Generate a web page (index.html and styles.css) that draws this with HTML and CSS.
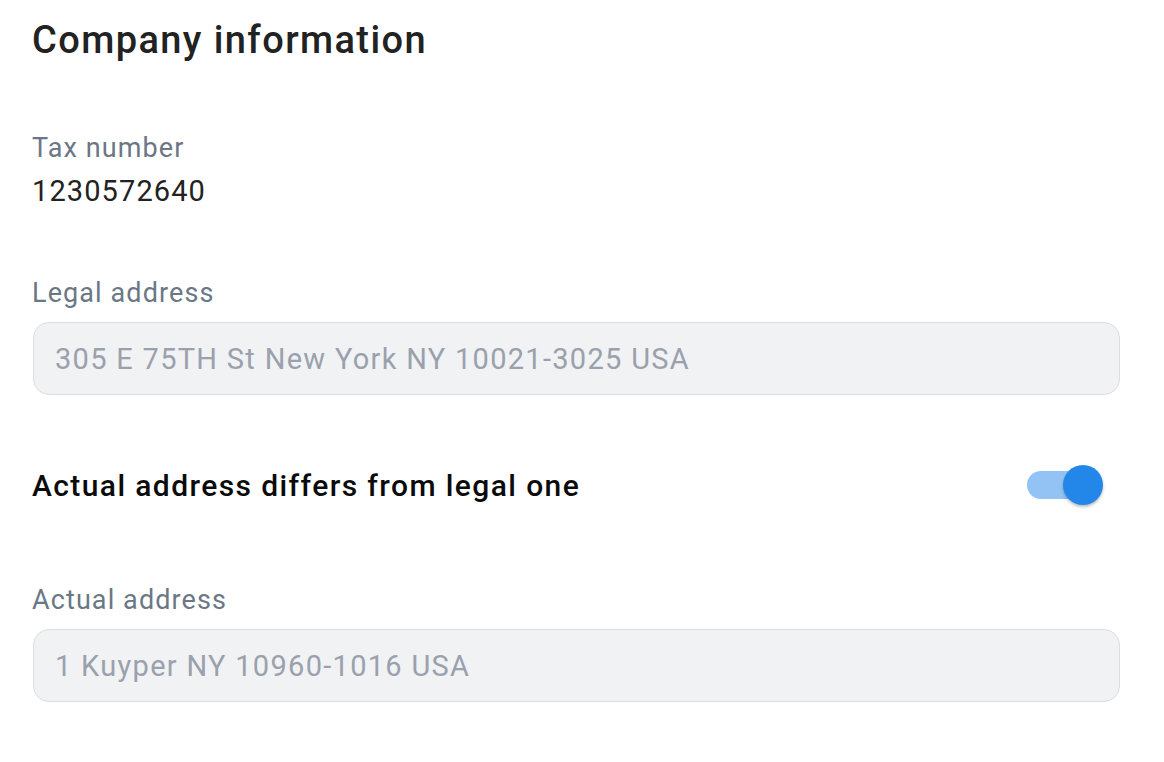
FILE: index.html
```html
<!DOCTYPE html>
<html lang="en">
<head>
<meta charset="utf-8">
<title>Company information</title>
<link rel="stylesheet" href="styles.css">
</head>
<body>
<main class="page">
  <h1 class="title">Company information</h1>

  <section class="field field-static">
    <div class="label">Tax number</div>
    <div class="value">1230572640</div>
  </section>

  <section class="field">
    <div class="label">Legal address</div>
    <div class="input">305 E 75TH St New York NY 10021-3025 USA</div>
  </section>

  <div class="switch-row">
    <span class="switch-text">Actual address differs from legal one</span>
    <span class="switch is-on" role="switch" aria-checked="true">
      <span class="switch-track"></span>
      <span class="switch-thumb"></span>
    </span>
  </div>

  <section class="field">
    <div class="label">Actual address</div>
    <div class="input">1 Kuyper NY 10960-1016 USA</div>
  </section>
</main>
</body>
</html>
```

FILE: styles.css
```css
html, body {
  margin: 0;
  padding: 0;
  background: #ffffff;
}

body {
  font-family: Roboto, "Noto Sans", "Liberation Sans", sans-serif;
  color: #222222;
}

.page {
  padding: 18px 44px 0 32px;
  display: flex;
  flex-direction: column;
}

.title {
  margin: 0;
  font-size: 38px;
  line-height: 44px;
  font-weight: 500;
  letter-spacing: 1.4px;
  color: #222222;
}

.field {
  display: flex;
  flex-direction: column;
}

.field-static {
  margin-top: 71px;
}

.label {
  font-size: 27px;
  line-height: 30px;
  letter-spacing: 1.1px;
  color: #6b7786;
}

.value {
  margin-top: 12px;
  font-size: 29px;
  line-height: 32px;
  letter-spacing: 1.1px;
  color: #222222;
}

.field + .field {
  margin-top: 71px;
}

.field .input {
  margin-top: 14px;
  margin-left: 1px;
  height: 73px;
  box-sizing: border-box;
  display: flex;
  align-items: center;
  padding-left: 21px;
  background: #f1f2f4;
  border: 1px solid #dcdde1;
  border-radius: 16px;
  font-size: 29px;
  letter-spacing: 1.3px;
  color: #9aa1ac;
}

.switch-row {
  margin-top: 70px;
  height: 40px;
  display: flex;
  align-items: center;
  justify-content: space-between;
}

.switch-row + .field {
  margin-top: 80px;
}

.switch-text {
  font-size: 30px;
  font-weight: 500;
  letter-spacing: 1.4px;
  color: #0b0b0b;
}

.switch {
  position: relative;
  width: 76px;
  height: 40px;
  margin-right: 17px;
  flex-shrink: 0;
}

.switch-track {
  position: absolute;
  left: 0;
  top: 6px;
  width: 64px;
  height: 28px;
  border-radius: 14px;
  background: #93c3f4;
}

.switch-thumb {
  position: absolute;
  right: 0;
  top: 0;
  width: 40px;
  height: 40px;
  border-radius: 50%;
  background: #2387e9;
  box-shadow: 0 2px 3px rgba(0, 0, 0, 0.25);
}
```
